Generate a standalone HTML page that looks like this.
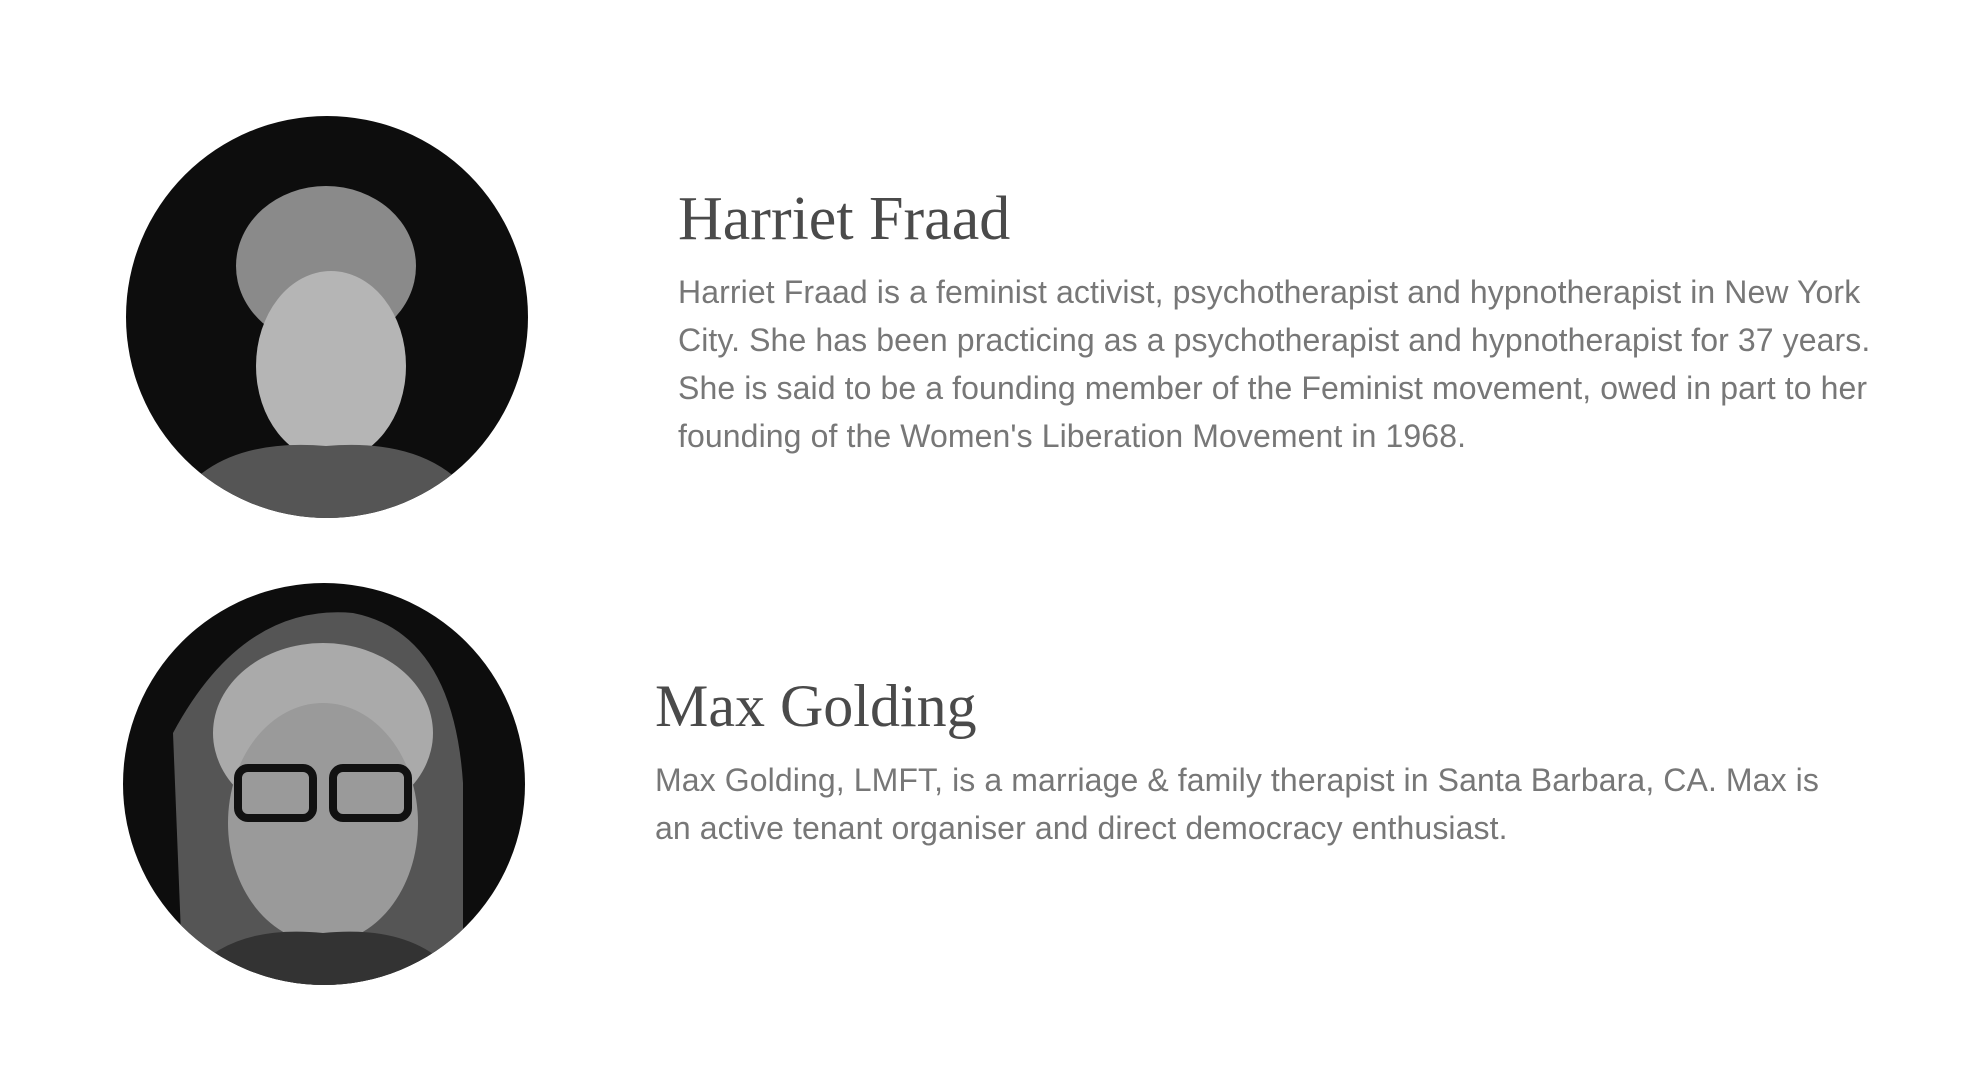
<!DOCTYPE html>
<html><head><meta charset="utf-8"><style>
body{margin:0;width:1988px;height:1078px;background:#fff;position:relative;overflow:hidden}
.c{position:absolute;width:402px;height:402px;border-radius:50%;overflow:hidden;background:#0d0d0d}
.n{position:absolute;font-family:"Liberation Serif",serif;font-size:62px;color:#4a4a4a;line-height:1;white-space:nowrap}
.p{position:absolute;font-family:"Liberation Sans",sans-serif;font-size:32px;color:#777;line-height:48px;white-space:nowrap;letter-spacing:0.1px}
</style></head><body>
<div class="c" style="left:126px;top:116px">
<svg width="402" height="402"><ellipse cx="200" cy="150" rx="90" ry="80" fill="#8a8a8a"/><ellipse cx="205" cy="250" rx="75" ry="95" fill="#b5b5b5"/><path d="M40 402 Q80 320 200 330 Q320 320 360 402Z" fill="#555"/></svg>
</div>
<div class="c" style="left:123px;top:583px">
<svg width="402" height="402"><path d="M60 402 L50 150 Q120 20 230 30 Q330 50 340 200 L340 402Z" fill="#555"/><ellipse cx="200" cy="150" rx="110" ry="90" fill="#aaa"/><ellipse cx="200" cy="240" rx="95" ry="120" fill="#9a9a9a"/><rect x="115" y="185" width="75" height="50" rx="10" fill="none" stroke="#111" stroke-width="8"/><rect x="210" y="185" width="75" height="50" rx="10" fill="none" stroke="#111" stroke-width="8"/><path d="M60 402 Q100 340 200 350 Q300 340 340 402Z" fill="#333"/></svg>
</div>
<div class="n" style="left:678px;top:188px">Harriet Fraad</div>
<div class="p" style="left:678px;top:268px">Harriet Fraad is a feminist activist, psychotherapist and hypnotherapist in New York<br>City. She has been practicing as a psychotherapist and hypnotherapist for 37 years.<br>She is said to be a founding member of the Feminist movement, owed in part to her<br>founding of the Women's Liberation Movement in 1968.</div>
<div class="n" style="left:655px;top:676px;font-size:60px">Max Golding</div>
<div class="p" style="left:655px;top:756px">Max Golding, LMFT, is a marriage &amp; family therapist in Santa Barbara, CA. Max is<br>an active tenant organiser and direct democracy enthusiast.</div>
</body></html>
